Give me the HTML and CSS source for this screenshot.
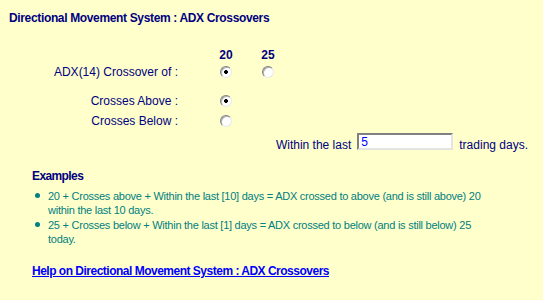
FILE: index.html
```html
<!DOCTYPE html>
<html lang="en">
	<head>
		<meta charset="UTF-8">
		<title>ADX Crossovers</title>
		<link rel="stylesheet" href="styles.css">
	</head>
	<body>
		<div class="panel">
			<h1 class="title">Directional Movement System : ADX Crossovers</h1>

			<form class="crossover">
				<div class="grid">
					<span></span>
					<span class="hd">20</span>
					<span class="hd">25</span>

					<label class="lbl">ADX(14) Crossover of :</label>
					<input class="radio" type="radio" name="level" value="20" checked>
					<input class="radio" type="radio" name="level" value="25">

					<span class="spacer"></span>

					<label class="lbl">Crosses Above :</label>
					<input class="radio" type="radio" name="dir" value="above" checked>
					<span></span>

					<label class="lbl">Crosses Below :</label>
					<input class="radio" type="radio" name="dir" value="below">
					<span></span>
				</div>

				<div class="within">
					<span class="txt">Within the last</span>
					<input class="days" type="text" value="5">
					<span class="txt">trading days.</span>
				</div>
			</form>

			<div class="examples">
				<h2>Examples</h2>
				<ul>
					<li>20 + Crosses above + Within the last [10] days = ADX crossed to above (and is still above) 20 within the last 10 days.</li>
					<li>25 + Crosses below + Within the last [1] days = ADX crossed to below (and is still below) 25 today.</li>
				</ul>
			</div>

			<a class="help" href="#">Help on Directional Movement System : ADX Crossovers</a>
		</div>
	</body>
</html>
```

FILE: styles.css
```css
* {
	margin: 0;
	padding: 0;
	box-sizing: border-box;
}

body {
	background: #ffffcc;
	font-family: "Liberation Sans", Arial, sans-serif;
	font-size: 12px;
	line-height: 14px;
	color: #000080;
}

.panel {
	padding-bottom: 20px;
}

.title {
	font-size: 12px;
	font-weight: bold;
	line-height: 14px;
	letter-spacing: -0.35px;
	padding: 11px 0 0 9px;
}

.grid {
	display: grid;
	grid-template-columns: 198px 56px 28px;
	grid-template-rows: 17px 17px 11px 20px 20px;
	align-items: center;
	margin-top: 21px;
}

.hd {
	font-weight: bold;
	text-align: center;
}

.lbl {
	text-align: right;
	padding-right: 20px;
}

.spacer {
	grid-column: 1 / 4;
}

.radio {
	appearance: none;
	justify-self: center;
	width: 12px;
	height: 12px;
	border-radius: 50%;
	border: 1px solid;
	border-color: #808080 #e8e8e8 #e8e8e8 #808080;
	background: #fff;
	box-shadow: inset 1px 1px 0 #b0b0b0;
}

.radio:checked {
	background: radial-gradient(circle, #000 0, #000 1.6px, #fff 2.2px);
}

.within {
	display: flex;
	justify-content: flex-end;
	align-items: flex-start;
	gap: 6px;
	padding-right: 15px;
	margin-top: 2px;
}

.within .txt {
	padding-top: 5px;
}

.days {
	width: 96px;
	height: 17px;
	border: 2px solid;
	border-color: #808080 #e4e4e4 #e4e4e4 #808080;
	background: #fff;
	color: #0000ff;
	font: 12px/13px "Liberation Sans", Arial, sans-serif;
	padding: 0 2px;
	outline: none;
}

.examples {
	padding: 17px 0 0 32px;
}

.examples h2 {
	font-size: 12px;
	font-weight: bold;
	letter-spacing: -0.6px;
}

.examples ul {
	list-style: none;
	padding: 6px 48px 0 16px;
	color: #008080;
	font-size: 11px;
	letter-spacing: -0.25px;
}

.examples li {
	position: relative;
}

.examples li + li {
	margin-top: 1px;
}

.examples li::before {
	content: "";
	position: absolute;
	left: -13px;
	top: 4px;
	width: 5px;
	height: 5px;
	border-radius: 50%;
	background: #008080;
}

.help {
	display: inline-block;
	margin: 18px 0 0 32px;
	font-weight: bold;
	letter-spacing: -0.5px;
	color: #0000ff;
}
```
